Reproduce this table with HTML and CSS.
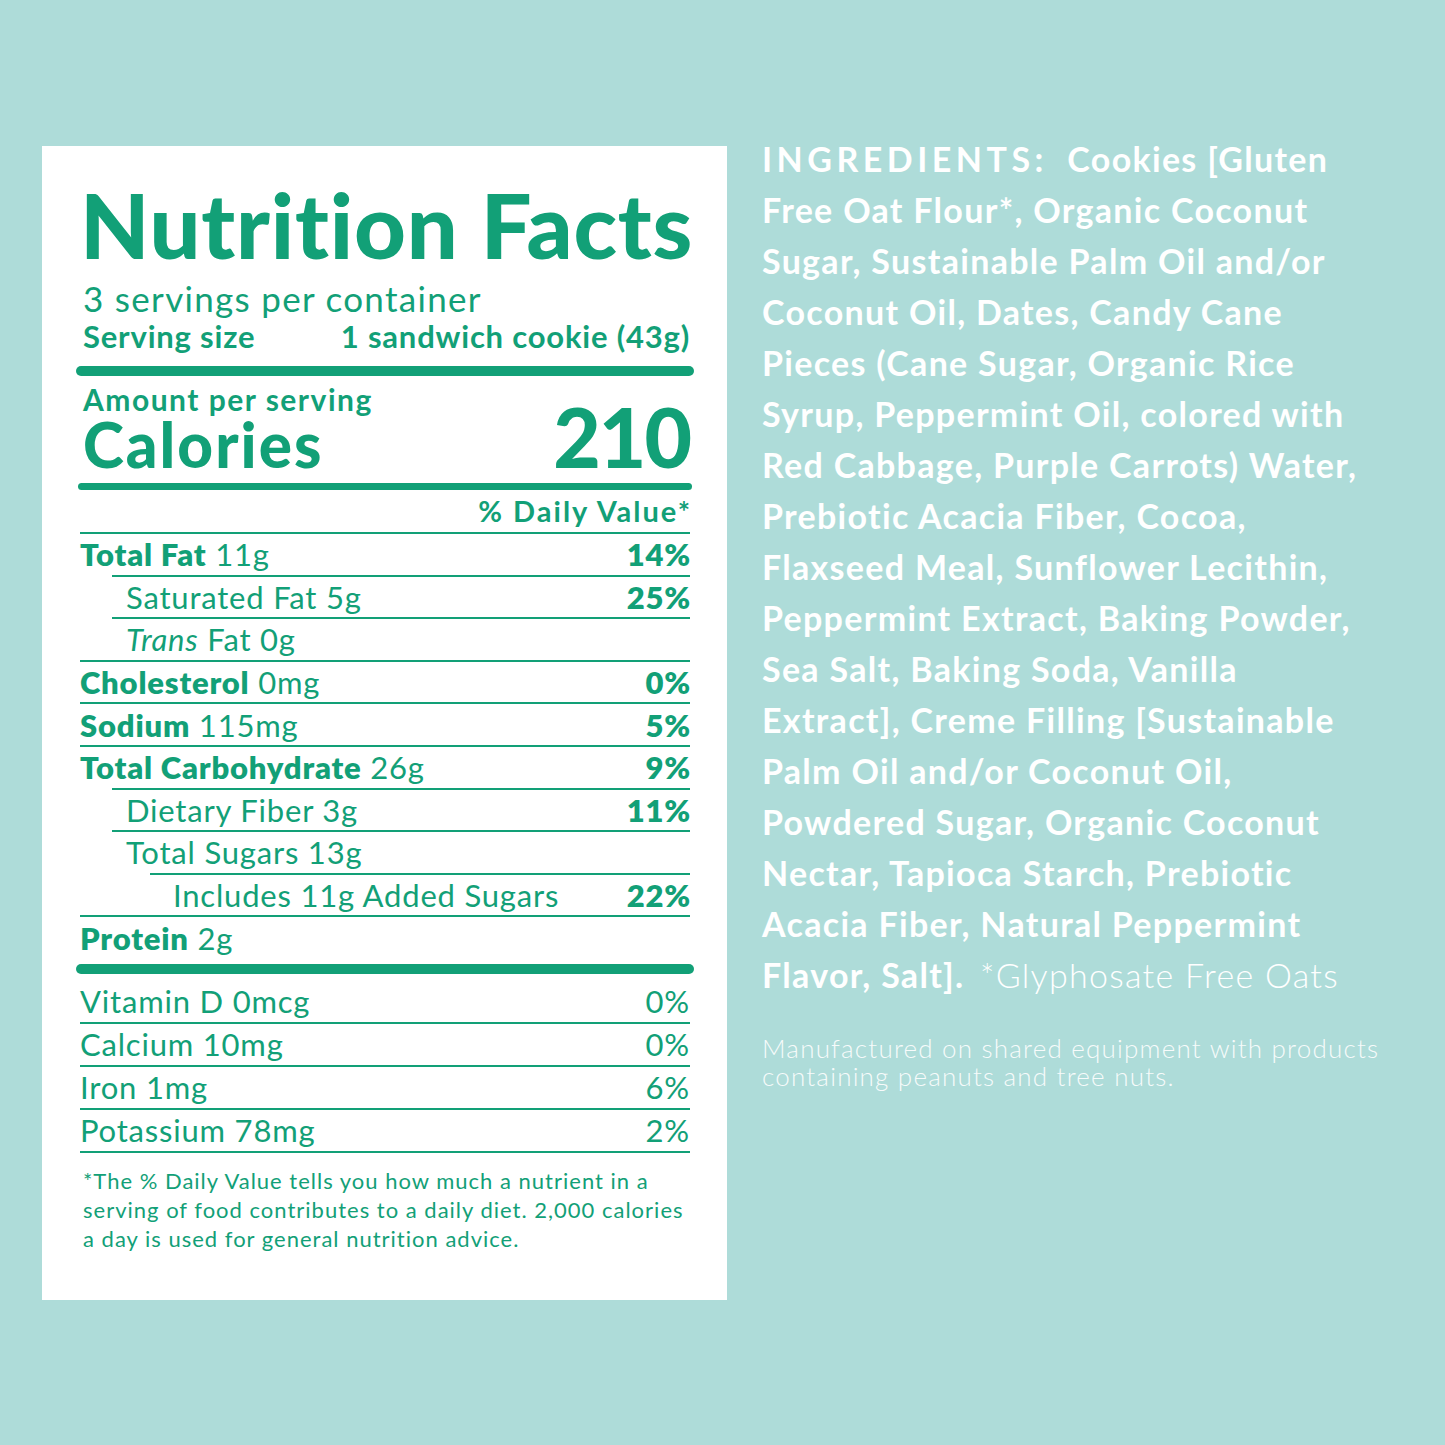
FILE: index.html
```html
<!DOCTYPE html>
<html lang="en">
<head>
<meta charset="utf-8">
<title>Nutrition Facts</title>
<link rel="stylesheet" href="styles.css">
</head>
<body>
<main class="page">
  <section class="label">
    <h1 class="title">Nutrition Facts</h1>
    <p class="servings">3 servings per container</p>
    <p class="serving-size"><span>Serving size</span><span>1 sandwich cookie (43g)</span></p>
    <div class="bar bar-thick"></div>
    <p class="amount">Amount per serving</p>
    <p class="calories"><span class="cal-label">Calories</span><span class="cal-value">210</span></p>
    <div class="bar bar-mid"></div>
    <p class="dv-head">% Daily Value*</p>
    <div class="rows">
      <div class="row"><span><b>Total Fat</b> 11g</span><b>14%</b></div>
      <div class="row sub"><span>Saturated Fat 5g</span><b>25%</b></div>
      <div class="row sub"><span><i>Trans</i> Fat 0g</span></div>
      <div class="row"><span><b>Cholesterol</b> 0mg</span><b>0%</b></div>
      <div class="row"><span><b>Sodium</b> 115mg</span><b>5%</b></div>
      <div class="row"><span><b>Total Carbohydrate</b> 26g</span><b>9%</b></div>
      <div class="row sub"><span>Dietary Fiber 3g</span><b>11%</b></div>
      <div class="row sub"><span>Total Sugars 13g</span></div>
      <div class="row subsub"><span>Includes 11g Added Sugars</span><b>22%</b></div>
      <div class="row"><span><b>Protein</b> 2g</span></div>
    </div>
    <div class="bar bar-thick bar-bottom"></div>
    <div class="vitamins">
      <div class="vrow"><span>Vitamin D 0mcg</span><span>0%</span></div>
      <div class="vrow"><span>Calcium 10mg</span><span>0%</span></div>
      <div class="vrow"><span>Iron 1mg</span><span>6%</span></div>
      <div class="vrow"><span>Potassium 78mg</span><span>2%</span></div>
    </div>
    <p class="footnote">*The % Daily Value tells you how much a nutrient in a<br>serving of food contributes to a daily diet. 2,000 calories<br>a day is used for general nutrition advice.</p>
  </section>
  <section class="ingredients">
    <p class="ing-text"><span class="ing-head">INGREDIENTS:</span> Cookies [Gluten<br>Free Oat Flour*, Organic Coconut<br>Sugar, Sustainable Palm Oil and/or<br>Coconut Oil, Dates, Candy Cane<br>Pieces (Cane Sugar, Organic Rice<br>Syrup, Peppermint Oil, colored with<br>Red Cabbage, Purple Carrots) Water,<br>Prebiotic Acacia Fiber, Cocoa,<br>Flaxseed Meal, Sunflower Lecithin,<br>Peppermint Extract, Baking Powder,<br>Sea Salt, Baking Soda, Vanilla<br>Extract], Creme Filling [Sustainable<br>Palm Oil and/or Coconut Oil,<br>Powdered Sugar, Organic Coconut<br>Nectar, Tapioca Starch, Prebiotic<br>Acacia Fiber, Natural Peppermint<br>Flavor, Salt]. <span class="ing-light">*Glyphosate Free Oats</span></p>
    <p class="allergen">Manufactured on shared equipment with products<br>containing peanuts and tree nuts.</p>
  </section>
</main>
</body>
</html>
```
FILE: styles.css
```css
* { box-sizing: border-box; }
html, body { margin: 0; padding: 0; }
body {
  background: #aedcd9;
  font-family: Lato, "Open Sans", sans-serif;
  color: #12a077;
}
p, h1 { margin: 0; }
.page {
  display: flex;
  align-items: flex-start;
  padding: 146px 0 0 42px;
  gap: 35px;
  height: 1445px;
}
.label {
  width: 685px;
  height: 1154px;
  background: #ffffff;
  padding: 32px 37px 0 38px;
  display: flex;
  flex-direction: column;
}
.title {
  font-size: 90px;
  font-weight: 900;
  line-height: 92px;
  letter-spacing: 0.8px;
  white-space: nowrap;
  margin-bottom: 9px;
}
.servings {
  font-size: 35px;
  line-height: 38px;
  letter-spacing: 1.3px;
  padding-left: 3px;
}
.serving-size {
  display: flex;
  justify-content: space-between;
  font-size: 31px;
  font-weight: 700;
  line-height: 38px;
  letter-spacing: 0.8px;
  padding-left: 3px;
}
.bar {
  background: #12a077;
  border-radius: 6px;
  margin: 0 -4px;
}
.bar-thick { height: 10px; margin-top: 11px; }
.amount {
  font-size: 30px;
  font-weight: 700;
  line-height: 34px;
  letter-spacing: 1.5px;
  margin-top: 6px;
  padding-left: 3px;
}
.calories {
  display: flex;
  justify-content: space-between;
  align-items: baseline;
  font-weight: 900;
  margin-top: -10px;
}
.cal-label { font-size: 62px; line-height: 50px; letter-spacing: 2px; padding-left: 3px; }
.cal-value { font-size: 82px; line-height: 60px; letter-spacing: -2px; }
.bar-mid { height: 7px; margin: 14px -2px 0; }
.dv-head {
  text-align: right;
  font-size: 29px;
  font-weight: 700;
  line-height: 42px;
  letter-spacing: 2px;
  margin-right: -2px;
}
.rows { display: flex; flex-direction: column; }
.row {
  height: 42.6px;
  border-top: 2px solid #12a077;
  display: flex;
  justify-content: space-between;
  align-items: center;
  font-size: 31px;
  line-height: 1;
  letter-spacing: 0.8px;
  padding-top: 1px;
}
.row b { font-weight: 800; }
.row > b { margin-right: -1px; }
.row.sub { margin-left: 32px; }
.row.sub > span { padding-left: 14px; }
.row.subsub { margin-left: 70px; }
.row.subsub > span { padding-left: 23px; }
.bar-bottom { margin-top: 6px; }
.vitamins { display: flex; flex-direction: column; margin-top: 7px; }
.vrow {
  height: 43px;
  border-bottom: 2px solid #12a077;
  display: flex;
  justify-content: space-between;
  align-items: center;
  font-size: 31px;
  line-height: 1;
  letter-spacing: 0.8px;
}
.footnote {
  font-size: 22px;
  line-height: 29px;
  letter-spacing: 1px;
  margin-top: 13px;
  padding-left: 3px;
}
.ingredients {
  color: #ffffff;
}
.ing-text {
  font-size: 34px;
  font-weight: 700;
  line-height: 51px;
  letter-spacing: 1.3px;
  white-space: nowrap;
  margin-top: -13px;
}
.ing-head { letter-spacing: 4.5px; margin-right: 10px; }
.ing-light { font-weight: 300; padding-left: 6px; }
.allergen {
  font-size: 26px;
  font-weight: 300;
  line-height: 28px;
  letter-spacing: 1.2px;
  margin-top: 34px;
  opacity: 0.9;
}
```
